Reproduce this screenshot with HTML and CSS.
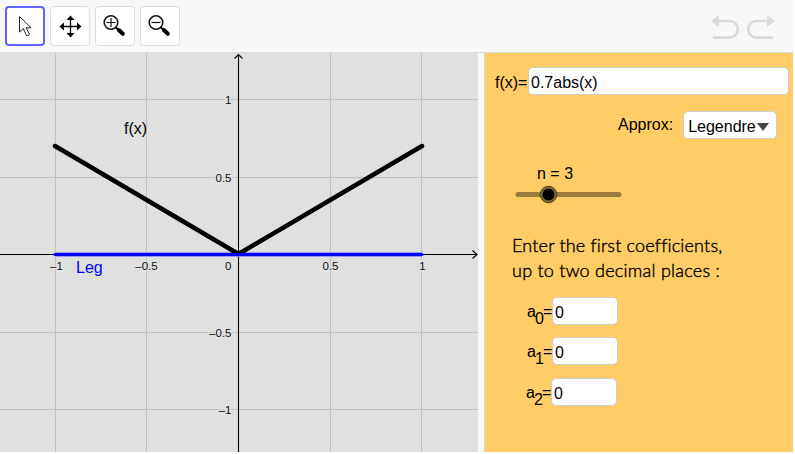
FILE: index.html
```html
<!DOCTYPE html>
<html lang="en">
<head>
    <meta charset="UTF-8">
    <meta name="viewport" content="width=device-width, initial-scale=1.0">
    <title>Legendre Approximation</title>
    <link rel="stylesheet" href="styles.css">
</head>
<body>
    <div class="applet">
        <header class="toolbar">
            <button class="tool selected" aria-label="Move">
                <svg width="36" height="36" viewBox="0 0 36 36">
                    <path d="M13.500 9.500v15.500l3.800-3.400 3.200 7q1.600.600 3-1.200l-3.400-6.600h5z" fill="#fff" stroke="#222" stroke-width="1"/>
                </svg>
            </button>
            <button class="tool" aria-label="Move view">
                <svg width="38" height="38" viewBox="0 0 38 38">
                    <path d="M19.500 11v17M11 19.500h17" stroke="#000" stroke-width="1.300"/>
                    <path d="M19.500 8.500l4 4.500h-8zM19.500 30.500l4-4.500h-8zM8.500 19.500l4.500-4v8zM30.500 19.500l-4.500-4v8z"/>
                </svg>
            </button>
            <button class="tool" aria-label="Zoom in">
                <svg width="38" height="38" viewBox="0 0 38 38">
                    <circle cx="15" cy="15.500" r="6.800" fill="none" stroke="#111" stroke-width="1.600"/>
                    <path d="M10.500 15.500h9M15 11v9" stroke="#111" stroke-width="1.200"/>
                    <path d="M19.500 20l3 3" stroke="#000" stroke-width="2"/>
                    <path d="M22.800 23l4 3.800" stroke="#000" stroke-width="4" stroke-linecap="round"/>
                </svg>
            </button>
            <button class="tool" aria-label="Zoom out">
                <svg width="38" height="38" viewBox="0 0 38 38">
                    <circle cx="15" cy="15.500" r="6.800" fill="none" stroke="#111" stroke-width="1.600"/>
                    <path d="M10.500 15.500h9" stroke="#111" stroke-width="1.200"/>
                    <path d="M19.500 20l3 3" stroke="#000" stroke-width="2"/>
                    <path d="M22.800 23l4 3.800" stroke="#000" stroke-width="4" stroke-linecap="round"/>
                </svg>
            </button>
            <div class="history">
                <svg width="28" height="26" viewBox="0 0 28 26">
                    <path d="M7 7h11.500a8.300 8.300 0 0 1 0 16.600H2" fill="none"/>
                    <path d="M0 7L8 1v12z" class="arrow-head"/>
                </svg>
                <svg width="28" height="26" viewBox="0 0 28 26">
                    <path d="M21 7H9.500a8.300 8.300 0 0 0 0 16.600H26" fill="none"/>
                    <path d="M28 7L20 1v12z" class="arrow-head"/>
                </svg>
            </div>
        </header>

        <main class="views">
            <svg class="graph" width="478" height="399" viewBox="0 53 478 399">
                <g class="grid">
                    <path d="M55.500 53v399M146.500 53v399M330.500 53v399M421.500 53v399"/>
                    <path d="M0 99.500h478M0 177.500h478M0 332.500h478M0 409.500h478"/>
                </g>
                <g class="axes">
                    <path d="M0 254.500h477M238.500 55v397"/>
                    <path d="M472.500 250.500l4.500 4-4.500 4M234.500 58.500l4-4 4 4"/>
                </g>
                <g class="ticks">
                    <text x="56.500" y="270" text-anchor="middle">–1</text>
                    <text x="146.500" y="270" text-anchor="middle">–0.5</text>
                    <text x="231.500" y="270" text-anchor="end">0</text>
                    <text x="330.500" y="270" text-anchor="middle">0.5</text>
                    <text x="422.500" y="270" text-anchor="middle">1</text>
                    <text x="231.500" y="104" text-anchor="end">1</text>
                    <text x="231.500" y="182" text-anchor="end">0.5</text>
                    <text x="231.500" y="337" text-anchor="end">–0.5</text>
                    <text x="231.500" y="414" text-anchor="end">–1</text>
                </g>
                <path class="leg-halo" d="M55 254.500h367"/>
                <path class="curve" d="M55 146l183.500 108L422 146"/>
                <path class="leg" d="M55 254.500h367"/>
                <text class="name" x="124" y="134">f(x)</text>
                <text class="name leg-name" x="76" y="273">Leg</text>
            </svg>

            <section class="panel">
                <div class="row function-row">
                    <label for="fx">f(x)=</label>
                    <input id="fx" class="field" type="text" value="0.7abs(x)">
                </div>
                <div class="row approx-row">
                    <span>Approx:</span>
                    <button class="field dropdown">Legendre<span class="caret"></span></button>
                </div>
                <div class="slider">
                    <div class="slider-label">n = 3</div>
                    <svg width="112" height="20" viewBox="0 0 112 20">
                        <path d="M6 10.500h101" stroke="#9b7c3f" stroke-width="5" stroke-linecap="round"/>
                        <circle cx="36.500" cy="10.500" r="8.300" fill="#806633" stroke="#4d4022" stroke-width="1"/>
                        <circle cx="36.500" cy="10.500" r="6" fill="#000"/>
                    </svg>
                </div>
                <div class="instructions">
                    <div class="line-one">Enter the first coefficients,</div>
                    <div class="line-two">up to two decimal places :</div>
                </div>
                <div class="coefficients">
                    <div class="row coefficient">
                        <label for="a0">a<sub>0</sub>=</label>
                        <input id="a0" class="field" type="text" value="0">
                    </div>
                    <div class="row coefficient">
                        <label for="a1">a<sub>1</sub>=</label>
                        <input id="a1" class="field" type="text" value="0">
                    </div>
                    <div class="row coefficient last">
                        <label for="a2">a<sub>2</sub>=</label>
                        <input id="a2" class="field" type="text" value="0">
                    </div>
                </div>
            </section>
        </main>
    </div>
</body>
</html>
```
FILE: styles.css
```css
* {
    box-sizing: border-box;
}
body {
    margin: 0;
    background-color: #fff;
    font-family: "Liberation Sans", Arial, sans-serif;
    font-size: 16px;
    color: #000;
    overflow: hidden;
}
svg {
    display: block;
}
.applet {
    width: 793px;
    height: 452px;
    background-color: #f8f8f8;
    overflow: hidden;
}
.toolbar {
    display: flex;
    align-items: flex-start;
    gap: 5px;
    height: 53px;
    padding: 6px 18px 0 5px;
    border-bottom: 1px solid #dadada;
}
.tool {
    display: flex;
    width: 40px;
    height: 40px;
    padding: 0;
    border: 1px solid #dcdcdc;
    border-radius: 4px;
    background-color: #fff;
}
.tool.selected {
    border: 2px solid #6161ff;
}
.tool.selected svg {
    margin: -1px 0 0 -1px;
}
.history {
    display: flex;
    gap: 8px;
    margin: 8px 0 0 auto;
}
.history path {
    stroke: #dadada;
    stroke-width: 2.6;
}
.history .arrow-head {
    fill: #dadada;
    stroke: none;
}
.views {
    display: flex;
    gap: 6px;
    height: 399px;
}
.graph {
    background-color: #e0e0e0;
}
.grid {
    stroke: #c0c0c0;
    stroke-width: 1;
}
.axes {
    fill: none;
    stroke: #000;
    stroke-width: 1.1;
}
.ticks text {
    font-size: 11.5px;
    fill: #111;
    stroke: #e0e0e0;
    stroke-width: 3px;
    paint-order: stroke;
}
.curve {
    fill: none;
    stroke: #000;
    stroke-width: 4.5;
    stroke-linecap: round;
    stroke-linejoin: round;
}
.leg {
    stroke: #00f;
    stroke-width: 3;
    stroke-linecap: round;
}
.leg-halo {
    stroke: #9c9cec;
    stroke-width: 5;
}
.name {
    font-size: 16px;
}
.leg-name {
    fill: #00f;
}
.panel {
    flex: 1;
    border-left: 1px solid #d8d8d8;
    background-color: #fc6;
}
.row {
    display: flex;
    align-items: center;
}
.field {
    height: 28px;
    padding: 3px 2px 0;
    border: 1px solid #ccc;
    border-radius: 5px;
    background-color: #fff;
    font: inherit;
    color: #000;
}
.function-row {
    padding: 14px 0 0 10px;
}
.function-row label {
    margin-top: 3px;
    width: 33px;
}
.function-row .field {
    width: 261px;
}
.approx-row {
    gap: 10px;
    padding: 16px 0 0 133px;
}
.dropdown {
    display: flex;
    align-items: center;
    width: 94px;
    padding: 3px 4px 0;
}
.caret {
    border: 6px solid transparent;
    border-top: 8px solid #444;
    border-bottom: 0;
    margin: 0 0 0 1px;
}
.slider {
    margin: 25px 0 0 27px;
}
.slider-label {
    padding-left: 25px;
    line-height: 20px;
}
.instructions {
    margin: 29px 0 0 27px;
    font-family: Lato, sans-serif;
    font-size: 18px;
    font-weight: 300;
    -webkit-text-stroke: 0.4px #000;
    line-height: 25px;
    white-space: nowrap;
}
.line-one {
    letter-spacing: 0.18px;
}
.line-two {
    letter-spacing: 0.25px;
}
.coefficients {
    display: flex;
    flex-direction: column;
    gap: 12px;
    margin: 14px 0 0 42px;
}
.coefficient label {
    width: 25px;
    margin-top: 2px;
    line-height: 18px;
    letter-spacing: -0.9px;
    white-space: nowrap;
}
.coefficient sub {
    position: relative;
    top: 7px;
    font-size: 16px;
    line-height: 0;
    vertical-align: baseline;
}
.coefficient .field {
    width: 66px;
}
.last {
    margin: 1px 0 0 -1px;
}
```
